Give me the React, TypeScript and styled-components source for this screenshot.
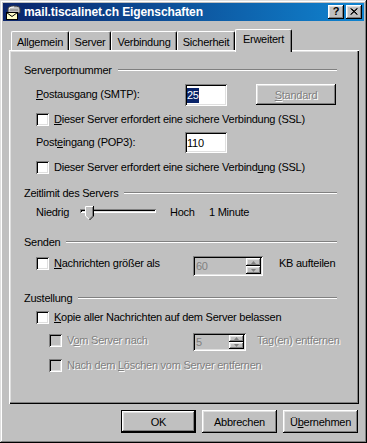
import React from "react";
import styled, { createGlobalStyle, css } from "styled-components";

const GlobalStyle = createGlobalStyle`
  html, body { margin: 0; padding: 0; background: #c0c0c0; }
  body {
    font-family: "Liberation Sans", Arial, sans-serif;
    font-size: 11px;
    letter-spacing: -0.25px;
    color: #000;
  }
  * { box-sizing: border-box; }
`;

const raised = css`
  box-shadow: inset -1px -1px #000, inset 1px 1px #fff, inset -2px -2px #808080,
    inset 2px 2px #dfdfdf;
`;

const sunken = css`
  box-shadow: inset 1px 1px #808080, inset -1px -1px #fff, inset 2px 2px #000,
    inset -2px -2px #dfdfdf;
`;

const Window = styled.div`
  width: 367px;
  height: 443px;
  padding: 3px;
  background: #c0c0c0;
  box-shadow: inset -1px -1px #000, inset 1px 1px #dfdfdf, inset -2px -2px #808080,
    inset 2px 2px #fff;
  display: flex;
  flex-direction: column;
`;

const TitleBar = styled.div`
  height: 18px;
  flex: none;
  display: flex;
  align-items: center;
  gap: 3px;
  padding: 0 2px;
  background: linear-gradient(to right, #0a246a, #1084d0);
`;

const TitleText = styled.span`
  color: #fff;
  font-weight: bold;
  font-size: 12px;
  letter-spacing: -0.1px;
  white-space: nowrap;
`;

const CaptionButtons = styled.div`
  margin-left: auto;
  display: flex;
  gap: 2px;
`;

const CaptionButton = styled.div`
  width: 16px;
  height: 14px;
  background: #c0c0c0;
  ${raised};
  display: flex;
  align-items: center;
  justify-content: center;
  font-weight: bold;
  font-size: 11px;
  line-height: 11px;
  padding-bottom: 1px;
  color: #000;
`;

const Body = styled.div`
  flex: 1;
  display: flex;
  flex-direction: column;
  padding: 8px 5px 0 6px;
`;

const TabStrip = styled.div`
  height: 21px;
  flex: none;
  display: flex;
  align-items: flex-end;
  padding-left: 2px;
  position: relative;
  z-index: 1;
`;

const Tab = styled.div<{ $w: number; $active?: boolean }>`
  width: ${(p) => p.$w}px;
  height: ${(p) => (p.$active ? 23 : 19)}px;
  margin-bottom: ${(p) => (p.$active ? -2 : 0)}px;
  padding: ${(p) => (p.$active ? "0 0 4px" : "2px 0 0")};
  flex: none;
  display: flex;
  align-items: center;
  justify-content: center;
  background: #c0c0c0;
  border-top: 1px solid #fff;
  border-left: 1px solid #fff;
  border-right: 1px solid #000;
  border-radius: 2px 2px 0 0;
  box-shadow: inset -1px 0 #808080;
  white-space: nowrap;
`;

const Panel = styled.div`
  height: 354px;
  flex: none;
  display: flex;
  flex-direction: column;
  padding: 13px 22px 0 15px;
  box-shadow: inset 1px 1px #fff, inset -1px -1px #000, inset -2px -2px #808080,
    inset 2px 2px #dfdfdf;
`;

const GroupHeader = styled.div<{ $mt: number }>`
  height: 14px;
  margin-top: ${(p) => p.$mt}px;
  display: flex;
  align-items: center;
  gap: 6px;
  white-space: nowrap;
`;

const Rule = styled.div`
  flex: 1;
  height: 2px;
  border-top: 1px solid #808080;
  border-bottom: 1px solid #fff;
`;

const Row = styled.div<{ $h: number; $mt: number; $indent: number; $top?: boolean }>`
  height: ${(p) => p.$h}px;
  margin-top: ${(p) => p.$mt}px;
  padding-left: ${(p) => p.$indent}px;
  display: flex;
  align-items: ${(p) => (p.$top ? "flex-start" : "center")};
`;

const Text = styled.span<{ $disabled?: boolean; $w?: number; $ml?: number }>`
  flex: none;
  white-space: nowrap;
  ${(p) => (p.$w ? `width: ${p.$w}px;` : "")}
  margin-left: ${(p) => p.$ml ?? 0}px;
  color: ${(p) => (p.$disabled ? "#808080" : "#000")};
  text-shadow: ${(p) => (p.$disabled ? "1px 1px 0 #fff" : "none")};
  line-height: 15px;
  padding-bottom: 1px;
`;

const Key = styled.span`
  text-decoration: underline;
  text-underline-offset: 1px;
`;

const CheckItem = styled.div<{ $w?: number }>`
  height: 15px;
  flex: none;
  ${(p) => (p.$w ? `width: ${p.$w}px;` : "")}
  display: flex;
  align-items: center;
  gap: 5px;
`;

const Box = styled.span<{ $disabled?: boolean }>`
  width: 13px;
  height: 13px;
  flex: none;
  background: ${(p) => (p.$disabled ? "#c0c0c0" : "#fff")};
  ${sunken};
`;

const Field = styled.div<{ $w: number; $h: number }>`
  width: ${(p) => p.$w}px;
  height: ${(p) => p.$h}px;
  flex: none;
  background: #fff;
  ${sunken};
  display: flex;
  align-items: center;
  padding-left: 2px;
  white-space: nowrap;
`;

const Selection = styled.span`
  background: #0a246a;
  color: #fff;
  height: 15px;
  line-height: 15px;
  display: inline-block;
`;

const Button = styled.button<{ $w: number; $h: number; $default?: boolean; $ml?: number }>`
  width: ${(p) => p.$w}px;
  height: ${(p) => p.$h}px;
  margin: 0 0 0 ${(p) => p.$ml ?? 0}px;
  flex: none;
  padding: 0;
  font-family: "Liberation Sans", Arial, sans-serif;
  font-size: 11px;
  letter-spacing: -0.25px;
  color: #000;
  background: #c0c0c0;
  border: ${(p) => (p.$default ? "1px solid #000" : "none")};
  ${raised};
  display: flex;
  align-items: center;
  justify-content: center;
  align-self: flex-start;
  white-space: nowrap;
`;

const DisabledLabel = styled.span`
  color: #808080;
  text-shadow: 1px 1px 0 #fff;
`;

const SliderBox = styled.div`
  position: relative;
  width: 80px;
  height: 16px;
  flex: none;
  display: flex;
  align-items: flex-start;
  padding: 4px 2px 0;
`;

const Track = styled.div`
  flex: 1;
  height: 4px;
  ${sunken};
`;

const Thumb = styled.svg`
  position: absolute;
  left: 7px;
  top: 1px;
`;

const Spin = styled.div<{ $w: number; $h: number; $ml?: number }>`
  width: ${(p) => p.$w}px;
  height: ${(p) => p.$h}px;
  margin-left: ${(p) => p.$ml ?? 0}px;
  flex: none;
  display: flex;
  padding: 2px;
  background: #c0c0c0;
  ${sunken};
`;

const SpinValue = styled.span`
  flex: 1;
  display: flex;
  align-items: center;
  padding-left: 1px;
  color: #808080;
`;

const SpinButtons = styled.div`
  width: 15px;
  display: flex;
  flex-direction: column;
`;

const SpinButton = styled.div`
  flex: 1;
  background: #c0c0c0;
  ${raised};
  display: flex;
  align-items: center;
  justify-content: center;
`;

const ButtonRow = styled.div`
  margin-top: 6px;
  display: flex;
  justify-content: flex-end;
  gap: 6px;
  padding-right: 1px;
`;

const Arrow = ({ up }: { up?: boolean }) => (
  <svg width="5" height="3" viewBox="0 0 5 3">
    <polygon
      points={up ? "2.5,0 5,3 0,3" : "0,0 5,0 2.5,3"}
      fill="#808080"
    />
  </svg>
);

const MailIcon = () => (
  <svg width="16" height="16" viewBox="0 0 16 16">
    <path d="M3 9 V5 Q3 2 9 2 Q15 2 15 5 V9 Z" fill="#c0c0c0" stroke="#404040" strokeWidth="1" />
    <path d="M4 5 Q4 3 9 3" fill="none" stroke="#fff" strokeWidth="1" />
    <path d="M5 6 H13" stroke="#808080" strokeWidth="1" />
    <rect x="1.5" y="8.5" width="11" height="7" fill="#ffffc8" stroke="#000" strokeWidth="1" />
    <path d="M1.5 8.5 L7 12.5 L12.5 8.5" fill="none" stroke="#000" strokeWidth="1" />
  </svg>
);

const CloseGlyph = () => (
  <svg width="8" height="7" viewBox="0 0 8 7">
    <path d="M0.5 0.5 L7 6.5 M1.5 0.5 L7.5 6.5 M7 0.5 L0.5 6.5 M7.5 0.5 L1 6.5" stroke="#000" strokeWidth="1" />
  </svg>
);

export default function App() {
  return (
    <>
      <GlobalStyle />
      <Window>
        <TitleBar>
          <MailIcon />
          <TitleText>mail.tiscalinet.ch Eigenschaften</TitleText>
          <CaptionButtons>
            <CaptionButton>?</CaptionButton>
            <CaptionButton>
              <CloseGlyph />
            </CaptionButton>
          </CaptionButtons>
        </TitleBar>
        <Body>
          <TabStrip>
            <Tab $w={58}>Allgemein</Tab>
            <Tab $w={42}>Server</Tab>
            <Tab $w={66}>Verbindung</Tab>
            <Tab $w={58}>Sicherheit</Tab>
            <Tab $w={57} $active>
              Erweitert
            </Tab>
          </TabStrip>
          <Panel>
            <GroupHeader $mt={0}>
              <span>Serverportnummer</span>
              <Rule />
            </GroupHeader>
            <Row $h={22} $mt={7} $indent={12}>
              <Text $w={149}>
                <Key>P</Key>ostausgang (SMTP):
              </Text>
              <Field $w={42} $h={22}>
                <Selection>25</Selection>
              </Field>
              <Button $w={80} $h={21} $ml={29}>
                <DisabledLabel>
                  <Key>S</Key>tandard
                </DisabledLabel>
              </Button>
            </Row>
            <Row $h={15} $mt={6} $indent={12}>
              <CheckItem>
                <Box />
                <Text>
                  <Key>D</Key>ieser Server erfordert eine sichere Verbindung (SSL)
                </Text>
              </CheckItem>
            </Row>
            <Row $h={21} $mt={5} $indent={12}>
              <Text $w={149}>
                Post<Key>e</Key>ingang (POP3):
              </Text>
              <Field $w={42} $h={21}>
                110
              </Field>
            </Row>
            <Row $h={15} $mt={7} $indent={12}>
              <CheckItem>
                <Box />
                <Text>
                  Dieser Server erfordert eine sichere Verbind<Key>u</Key>ng (SSL)
                </Text>
              </CheckItem>
            </Row>

            <GroupHeader $mt={11}>
              <span>Zeitlimit des Servers</span>
              <Rule />
            </GroupHeader>
            <Row $h={16} $mt={5} $indent={12}>
              <Text $w={42}>Niedrig</Text>
              <SliderBox>
                <Track />
                <Thumb width="9" height="14" viewBox="0 0 9 14">
                  <polygon points="0,0 9,0 9,10 4.5,14 0,10" fill="#c0c0c0" />
                  <polyline points="0.5,10 0.5,0.5 8,0.5" fill="none" stroke="#fff" strokeWidth="1" />
                  <polyline points="0.5,10 4.5,13.5" fill="none" stroke="#fff" strokeWidth="1" />
                  <polyline points="8.5,0 8.5,10 4.5,14" fill="none" stroke="#000" strokeWidth="1" />
                  <polyline points="7.5,1 7.5,10 4.5,13" fill="none" stroke="#808080" strokeWidth="1" />
                </Thumb>
              </SliderBox>
              <Text $w={39} $ml={12}>
                Hoch
              </Text>
              <Text>1 Minute</Text>
            </Row>

            <GroupHeader $mt={14}>
              <span>Senden</span>
              <Rule />
            </GroupHeader>
            <Row $h={20} $mt={7} $indent={12} $top>
              <CheckItem $w={157}>
                <Box />
                <Text>
                  <Key>N</Key>achrichten größer als
                </Text>
              </CheckItem>
              <Spin $w={70} $h={20}>
                <SpinValue>60</SpinValue>
                <SpinButtons>
                  <SpinButton>
                    <Arrow up />
                  </SpinButton>
                  <SpinButton>
                    <Arrow />
                  </SpinButton>
                </SpinButtons>
              </Spin>
              <Text $ml={16}>KB aufteilen</Text>
            </Row>

            <GroupHeader $mt={15}>
              <span>Zustellung</span>
              <Rule />
            </GroupHeader>
            <Row $h={15} $mt={5} $indent={12}>
              <CheckItem>
                <Box />
                <Text>
                  <Key>K</Key>opie aller Nachrichten auf dem Server belassen
                </Text>
              </CheckItem>
            </Row>
            <Row $h={18} $mt={8} $indent={25} $top>
              <CheckItem $w={144}>
                <Box $disabled />
                <Text $disabled>
                  V<Key>o</Key>m Server nach
                </Text>
              </CheckItem>
              <Spin $w={53} $h={18}>
                <SpinValue>5</SpinValue>
                <SpinButtons>
                  <SpinButton>
                    <Arrow up />
                  </SpinButton>
                  <SpinButton>
                    <Arrow />
                  </SpinButton>
                </SpinButtons>
              </Spin>
              <Text $disabled $ml={11}>
                Tag(en) entfernen
              </Text>
            </Row>
            <Row $h={15} $mt={7} $indent={25}>
              <CheckItem>
                <Box $disabled />
                <Text $disabled>
                  Nach dem <Key>L</Key>öschen vom Server entfernen
                </Text>
              </CheckItem>
            </Row>
          </Panel>
          <ButtonRow>
            <Button $w={75} $h={23} $default>
              OK
            </Button>
            <Button $w={75} $h={23}>
              Abbrechen
            </Button>
            <Button $w={75} $h={23}>
              Ü<Key>b</Key>ernehmen
            </Button>
          </ButtonRow>
        </Body>
      </Window>
    </>
  );
}
